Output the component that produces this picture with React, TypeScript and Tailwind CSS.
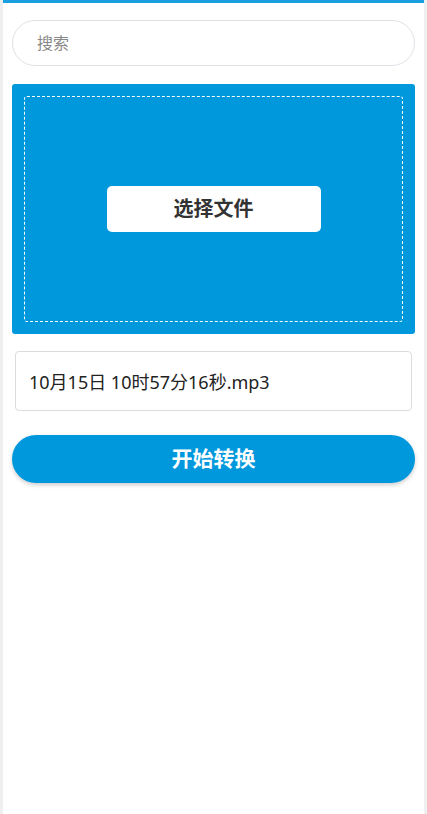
import React from "react";

export default function App() {
  const font = { fontFamily: '"Noto Sans", "Noto Sans CJK SC", sans-serif' };
  return (
    <div className="min-h-[814px] w-[427px] bg-[#efefef] px-[3px]" style={font}>
      <div className="min-h-[814px] bg-white">
        <div className="h-[3px] bg-[#1aa0e0]" />
        <div className="px-[9px] pt-[17px]">
          <div className="flex h-[46px] items-center rounded-full border border-[#dde1e6] pl-[24px] text-[16px] text-[#888]">
            搜索
          </div>
          <div className="mt-[18px] h-[250px] rounded-[3px] bg-[#0098dd] p-[12px]">
            <div className="flex h-full items-center justify-center rounded-[3px] border border-dashed border-white">
              <div className="flex h-[46px] w-[214px] items-center justify-center rounded-[5px] bg-white text-[20px] font-bold text-[#333]">
                选择文件
              </div>
            </div>
          </div>
          <div className="mx-[3px] mt-[17px] flex h-[60px] items-center rounded-[4px] border border-[#dcdcdc] pl-[13px] pt-[2px] text-[18px] text-[#222]">
            10月15日 10时57分16秒.mp3
          </div>
          <div className="mt-[24px] flex h-[48px] items-center justify-center rounded-full bg-[#0098dd] text-[21px] font-bold text-white shadow-[0_2px_4px_rgba(0,0,0,0.2)]">
            开始转换
          </div>
        </div>
      </div>
    </div>
  );
}
